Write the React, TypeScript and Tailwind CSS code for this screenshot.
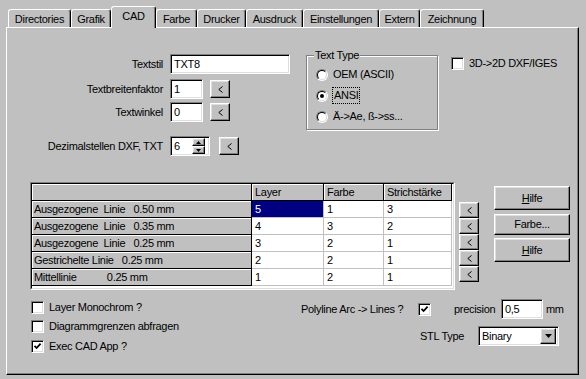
import React from 'react';

const raised =
  'border border-t-white border-l-white border-r-black border-b-black shadow-[inset_-1px_-1px_0_#808080,inset_1px_1px_0_#dfdfdf] bg-[#c0c0c0]';
const sunken =
  'border border-t-[#808080] border-l-[#808080] border-r-white border-b-white shadow-[inset_1px_1px_0_#000,inset_-1px_-1px_0_#dfdfdf] bg-white';

const tabs = [
  { name: 'Directories', w: 'w-[63px]' },
  { name: 'Grafik', w: 'w-[40px]' },
  { name: 'CAD', w: 'w-[45px]', active: true },
  { name: 'Farbe', w: 'w-[41px]' },
  { name: 'Drucker', w: 'w-[49px]' },
  { name: 'Ausdruck', w: 'w-[57px]' },
  { name: 'Einstellungen', w: 'w-[76px]' },
  { name: 'Extern', w: 'w-[41px]' },
  { name: 'Zeichnung', w: 'w-[64px]' },
];

const rows = [
  { label: 'Ausgezogene  Linie   0.50 mm', layer: '5', farbe: '1', strich: '3' },
  { label: 'Ausgezogene  Linie   0.35 mm', layer: '4', farbe: '3', strich: '2' },
  { label: 'Ausgezogene  Linie   0.25 mm', layer: '3', farbe: '2', strich: '1' },
  { label: 'Gestrichelte Linie   0.25 mm', layer: '2', farbe: '2', strich: '1' },
  { label: 'Mittellinie           0.25 mm', layer: '1', farbe: '2', strich: '1' },
];

const Check: React.FC<{ checked?: boolean }> = ({ checked }) => (
  <div className={`${sunken} w-[13px] h-[13px] flex items-center justify-center shrink-0`}>
    {checked && (
      <svg width="9" height="9" viewBox="0 0 9 9">
        <path d="M1.5 3.8 L3.6 6 L7.6 1.6" stroke="#000" strokeWidth="1.8" fill="none" />
      </svg>
    )}
  </div>
);

const Radio: React.FC<{ checked?: boolean }> = ({ checked }) => (
  <div className="w-[12px] h-[12px] rounded-full border border-t-[#808080] border-l-[#808080] border-r-white border-b-white shrink-0">
    <div className="w-full h-full rounded-full border border-t-black border-l-black border-r-[#dfdfdf] border-b-[#dfdfdf] bg-white flex items-center justify-center">
      {checked && <div className="w-[4px] h-[4px] rounded-full bg-black" />}
    </div>
  </div>
);

// small "<" arrow button
const SmallBtn: React.FC<{ className?: string }> = ({ className = '' }) => (
  <div className={`${raised} w-[20px] flex items-center justify-center ${className}`}>
    <svg width="5" height="7" viewBox="0 0 5 7">
      <polyline points="4.5,0.5 0.8,3.5 4.5,6.5" stroke="#000" strokeWidth="1" fill="none" />
    </svg>
  </div>
);

export default function App() {
  return (
    <div className="w-[586px] h-[379px] bg-[#c0c0c0] text-black text-[11px] leading-none tracking-[-0.3px] font-['Liberation_Sans',Arial,sans-serif] overflow-hidden flex flex-col select-none">
      {/* Tabs */}
      <div className="flex items-start h-[21px] mt-[6px] pl-[8px]">
        {tabs.map((t) =>
          t.active ? (
            <div
              key={t.name}
              className={`${t.w} relative z-10 h-[22px] bg-[#c0c0c0] border-t border-l border-r border-t-white border-l-white border-r-black rounded-t-[3px] shadow-[inset_-1px_0_0_#808080] flex justify-center pt-[4px]`}
            >
              {t.name}
            </div>
          ) : (
            <div
              key={t.name}
              className={`${t.w} mt-[3px] h-[18px] border-t border-l border-r border-t-white border-l-white border-r-black rounded-t-[3px] shadow-[inset_-1px_0_0_#808080] flex items-center justify-center pt-[1px]`}
            >
              {t.name}
            </div>
          )
        )}
      </div>

      {/* Panel */}
      <div className="ml-[6px] w-[573px] h-[348px] border border-t-white border-l-white border-r-black border-b-black shadow-[inset_-1px_-1px_0_#808080] flex flex-col">
        {/* Top section */}
        <div className="flex items-start mt-[26px]">
          <div className="w-[299px] flex flex-col">
            <div className="flex items-center h-[20px]">
              <span className="w-[156px] text-right">Textstil</span>
              <div className={`${sunken} ml-[7px] w-[120px] h-[20px] flex items-center pl-[3px]`}>TXT8</div>
            </div>
            <div className="flex items-center h-[20px] mt-[5px]">
              <span className="w-[156px] text-right">Textbreitenfaktor</span>
              <div className={`${sunken} ml-[7px] w-[33px] h-[20px] flex items-center pl-[3px]`}>1</div>
              <SmallBtn className="ml-[7px] h-[18px]" />
            </div>
            <div className="flex items-center h-[20px] mt-[3px]">
              <span className="w-[156px] text-right">Textwinkel</span>
              <div className={`${sunken} ml-[7px] w-[33px] h-[20px] flex items-center pl-[3px]`}>0</div>
              <SmallBtn className="ml-[7px] h-[18px]" />
            </div>
            <div className="flex items-center h-[20px] mt-[14px]">
              <span className="w-[156px] text-right">Dezimalstellen DXF, TXT</span>
              <div className={`${sunken} ml-[7px] w-[40px] h-[20px] flex items-center justify-between pl-[3px] pr-[4px]`}>
                <span>6</span>
                <div className="flex flex-col">
                  <div className={`${raised} w-[13px] h-[8px] flex items-center justify-center`}>
                    <svg width="5" height="3" viewBox="0 0 5 3"><polygon points="2.5,0 5,3 0,3" fill="#000" /></svg>
                  </div>
                  <div className={`${raised} w-[13px] h-[8px] flex items-center justify-center`}>
                    <svg width="5" height="3" viewBox="0 0 5 3"><polygon points="0,0 5,0 2.5,3" fill="#000" /></svg>
                  </div>
                </div>
              </div>
              <SmallBtn className="ml-[9px] h-[18px]" />
            </div>
          </div>

          {/* Text Type group */}
          <div className="relative w-[132px] h-[75px] mt-[1px] border border-[#808080] shadow-[1px_1px_0_#fff,inset_1px_1px_0_#fff] pt-[8px]">
            <span className="absolute -top-[6px] left-[7px] px-[1px] bg-[#c0c0c0]">Text Type</span>
            <div className="flex items-center h-[21px] pl-[9px]">
              <Radio />
              <span className="ml-[5px]">OEM (ASCII)</span>
            </div>
            <div className="flex items-center h-[21px] pl-[9px]">
              <Radio checked />
              <span className="ml-[4px] border border-dotted border-black px-[1px] py-[2px]">ANSI</span>
            </div>
            <div className="flex items-center h-[21px] pl-[9px]">
              <Radio />
              <span className="ml-[5px]">Ä-&gt;Ae, ß-&gt;ss...</span>
            </div>
          </div>

          <div className="ml-[13px] mt-[3px] flex items-center">
            <Check />
            <span className="ml-[5px]">3D-&gt;2D DXF/IGES</span>
          </div>
        </div>

        {/* Table section */}
        <div className="flex items-start mt-[26px]">
          <div className="ml-[23px] w-[425px] h-[108px] border border-t-[#808080] border-l-[#808080] border-r-white border-b-white">
            <div className="w-full h-full border border-t-black border-l-black border-r-[#dfdfdf] border-b-[#dfdfdf] bg-white">
              <div className="flex h-[17px]">
                <div className="w-[220px] bg-[#c0c0c0] border-r border-b border-black shadow-[inset_1px_1px_0_#fff]" />
                <div className="w-[72px] bg-[#c0c0c0] border-r border-b border-black shadow-[inset_1px_1px_0_#fff] flex items-center pl-[3px]">Layer</div>
                <div className="w-[60px] bg-[#c0c0c0] border-r border-b border-black shadow-[inset_1px_1px_0_#fff] flex items-center pl-[3px]">Farbe</div>
                <div className="w-[68px] bg-[#c0c0c0] border-r border-b border-black shadow-[inset_1px_1px_0_#fff] flex items-center pl-[3px]">Strichstärke</div>
              </div>
              {rows.map((r, i) => (
                <div key={i} className="flex h-[17px]">
                  <div className="w-[220px] bg-[#c0c0c0] border-r border-b border-black shadow-[inset_1px_1px_0_#fff] flex items-center pl-[2px] whitespace-pre">
                    {r.label}
                  </div>
                  <div
                    className={`w-[72px] border-r border-b border-[#c0c0c0] flex items-center pl-[3px] ${
                      i === 0 ? 'bg-[#000080] text-white' : ''
                    }`}
                  >
                    {r.layer}
                  </div>
                  <div className="w-[60px] border-r border-b border-[#c0c0c0] flex items-center pl-[3px]">{r.farbe}</div>
                  <div className="w-[68px] border-r border-b border-[#c0c0c0] flex items-center pl-[3px]">{r.strich}</div>
                </div>
              ))}
            </div>
          </div>

          <div className="ml-[4px] mt-[20px] flex flex-col">
            {rows.map((_, i) => (
              <SmallBtn key={i} className="h-[16px]" />
            ))}
          </div>

          <div className="ml-[15px] mt-[4px] flex flex-col">
            <div className={`${raised} w-[76px] h-[24px] flex items-center justify-center`}>
              <span><span className="underline">H</span>ilfe</span>
            </div>
            <div className={`${raised} w-[76px] h-[21px] mt-[4px] flex items-center justify-center`}>Farbe...</div>
            <div className={`${raised} w-[76px] h-[24px] mt-[3px] flex items-center justify-center`}>
              <span><span className="underline">H</span>ilfe</span>
            </div>
          </div>
        </div>

        {/* Bottom section */}
        <div className="flex items-start">
          <div className="ml-[24px] w-[270px] mt-[11px] flex flex-col">
            <div className="flex items-center h-[13px]">
              <Check />
              <span className="ml-[5px]">Layer Monochrom ?</span>
            </div>
            <div className="flex items-center h-[13px] mt-[6px]">
              <Check />
              <span className="ml-[5px]">Diagrammgrenzen abfragen</span>
            </div>
            <div className="flex items-center h-[13px] mt-[7px]">
              <Check checked />
              <span className="ml-[5px]">Exec CAD App ?</span>
            </div>
          </div>

          <div className="mt-[9px] flex flex-col">
            <div className="flex items-center h-[20px]">
              <span className="w-[117px]">Polyline Arc -&gt; Lines ?</span>
              <Check checked />
              <span className="ml-[23px] w-[47px]">precision</span>
              <div className={`${sunken} w-[42px] h-[20px] flex items-center pl-[3px]`}>0,5</div>
              <span className="ml-[3px]">mm</span>
            </div>
            <div className="flex items-center h-[20px] mt-[7px] pl-[119px]">
              <span className="w-[58px]">STL Type</span>
              <div className={`${sunken} w-[81px] h-[20px] flex items-center justify-between pl-[3px] pr-[2px]`}>
                <span>Binary</span>
                <div className={`${raised} w-[16px] h-[16px] flex items-center justify-center`}>
                  <svg width="7" height="4" viewBox="0 0 7 4"><polygon points="0,0 7,0 3.5,4" fill="#000" /></svg>
                </div>
              </div>
            </div>
          </div>
        </div>
      </div>
    </div>
  );
}
